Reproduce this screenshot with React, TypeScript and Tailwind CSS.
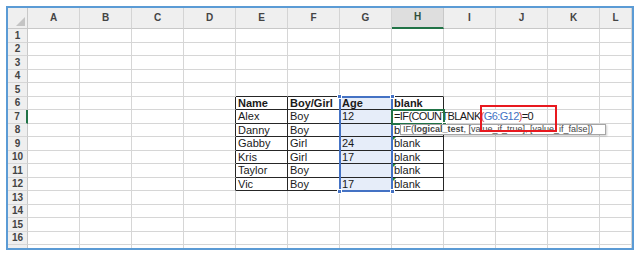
import clsx from "clsx";

const COLS = ["A", "B", "C", "D", "E", "F", "G", "H", "I", "J", "K", "L"];
const ROWS = Array.from({ length: 17 }, (_, i) => i + 1);

// table content E6:H12 (H7 is the cell being edited, drawn as an overlay)
const DATA: Record<number, string[]> = {
  6: ["Name", "Boy/Girl", "Age", "blank"],
  7: ["Alex", "Boy", "12", ""],
  8: ["Danny", "Boy", "", "blank"],
  9: ["Gabby", "Girl", "24", "blank"],
  10: ["Kris", "Girl", "17", "blank"],
  11: ["Taylor", "Boy", "", "blank"],
  12: ["Vic", "Boy", "17", "blank"],
};

const FLAGGED = [9, 11, 12];

function Cell({ r, c }: { r: number; c: number }) {
  const inRows = r >= 6 && r <= 12;
  const rightBlack = inRows && c >= 3 && c <= 7;
  const bottomBlack = r >= 5 && r <= 12 && c >= 4 && c <= 7;
  const text = inRows && c >= 4 && c <= 7 ? DATA[r][c - 4] : "";
  return (
    <div
      className={clsx(
        "relative border-r border-b pl-[2px] text-[11px] leading-[12.5px] whitespace-nowrap text-[#1a1a1a]",
        rightBlack ? "border-r-[#262626]" : "border-r-[#d6d6d6]",
        bottomBlack ? "border-b-[#262626]" : "border-b-[#d6d6d6]",
        c === 6 && inRows && "bg-[#e6edf9]",
        r === 6 && "font-bold"
      )}
    >
      {c === 7 && FLAGGED.includes(r) && (
        <span className="absolute left-0 top-0 w-0 h-0 border-t-[4px] border-r-[4px] border-t-[#1e8c3a] border-r-transparent" />
      )}
      {text}
    </div>
  );
}

function Handle({ className }: { className: string }) {
  return <span className={clsx("absolute w-[5px] h-[5px] border border-white", className)} />;
}

export default function App() {
  return (
    <div className="w-[640px] h-[256px] bg-white p-[6px] font-['Liberation_Sans',Arial,sans-serif]">
      <div className="relative w-[628px] h-[244px] border-2 border-[#5b9bd5] overflow-hidden bg-white">
        <div className="grid grid-cols-[20px_repeat(11,52px)_32px] grid-rows-[21px_repeat(17,13.5px)]">
          {/* corner */}
          <div className="relative bg-[#efefef] border-r border-b border-[#c8c8c8]">
            <svg className="absolute right-[2px] bottom-[2px]" width="9" height="9" viewBox="0 0 9 9">
              <polygon points="9,0 9,9 0,9" fill="#c4c4c4" />
            </svg>
          </div>
          {COLS.map((l) => (
            <div
              key={l}
              className={clsx(
                "flex items-end justify-center pb-[3px] text-[10px] font-bold border-r",
                l === "H"
                  ? "bg-[#dedede] text-[#2f4f3a] border-b-2 border-b-[#217346] border-r-[#c8c8c8]"
                  : "bg-[#efefef] text-[#444] border-b border-b-[#c8c8c8] border-r-[#d4d4d4]"
              )}
            >
              {l}
            </div>
          ))}
          {ROWS.map((r) => [
            <div
              key={`h${r}`}
              className={clsx(
                "flex items-center justify-center bg-[#efefef] text-[10px] font-bold text-[#444] border-b border-b-[#d6d6d6]",
                r === 7 ? "border-r-2 border-r-[#217346] bg-[#e2e2e2]" : "border-r border-r-[#c8c8c8]"
              )}
            >
              {r < 17 ? r : ""}
            </div>,
            ...COLS.map((_, c) => <Cell key={`${r}-${c}`} r={r} c={c} />),
          ])}
        </div>

        {/* selected range G6:G12 */}
        <div className="absolute left-[331px] top-[88px] w-[54px] h-[96px] border-2 border-[#4472c4]">
          <Handle className="-left-[4px] -top-[4px] bg-[#4472c4]" />
          <Handle className="-right-[4px] -top-[4px] bg-[#4472c4]" />
          <Handle className="-left-[4px] -bottom-[4px] bg-[#4472c4]" />
          <Handle className="-right-[4px] -bottom-[4px] bg-[#4472c4]" />
        </div>

        {/* in-cell edit of H7 */}
        <div className="absolute left-[385px] top-[102px] h-[13px] pl-[1px] pr-[3px] bg-white text-[11px] leading-[13px] tracking-[-0.6px] whitespace-nowrap text-[#1a1a1a]">
          =IF(COUNTBLANK<span className="text-[#d0464a]">(</span>
          <span className="text-[#4472c4]">G6:G12</span>
          <span className="text-[#d0464a]">)</span>=0
        </div>
        <div className="absolute left-[383px] top-[101px] w-[54px] h-[16px] border-2 border-[#217346]">
          <Handle className="-right-[4px] -bottom-[4px] bg-[#217346]" />
        </div>

        {/* function tooltip */}
        <div className="absolute left-[392px] top-[116px] w-[206px] h-[11px] px-[2px] bg-white border border-[#a6a6a6] shadow-[1px_1px_2px_rgba(0,0,0,0.2)] text-[9px] leading-[9px] whitespace-nowrap text-[#444]">
          IF(<span className="font-bold">logical_test</span>, [value_if_true], [value_if_false])
        </div>

        {/* red highlight box */}
        <div className="absolute left-[472px] top-[97px] w-[77px] h-[27px] border-2 border-[#e8191f]" />
      </div>
    </div>
  );
}
